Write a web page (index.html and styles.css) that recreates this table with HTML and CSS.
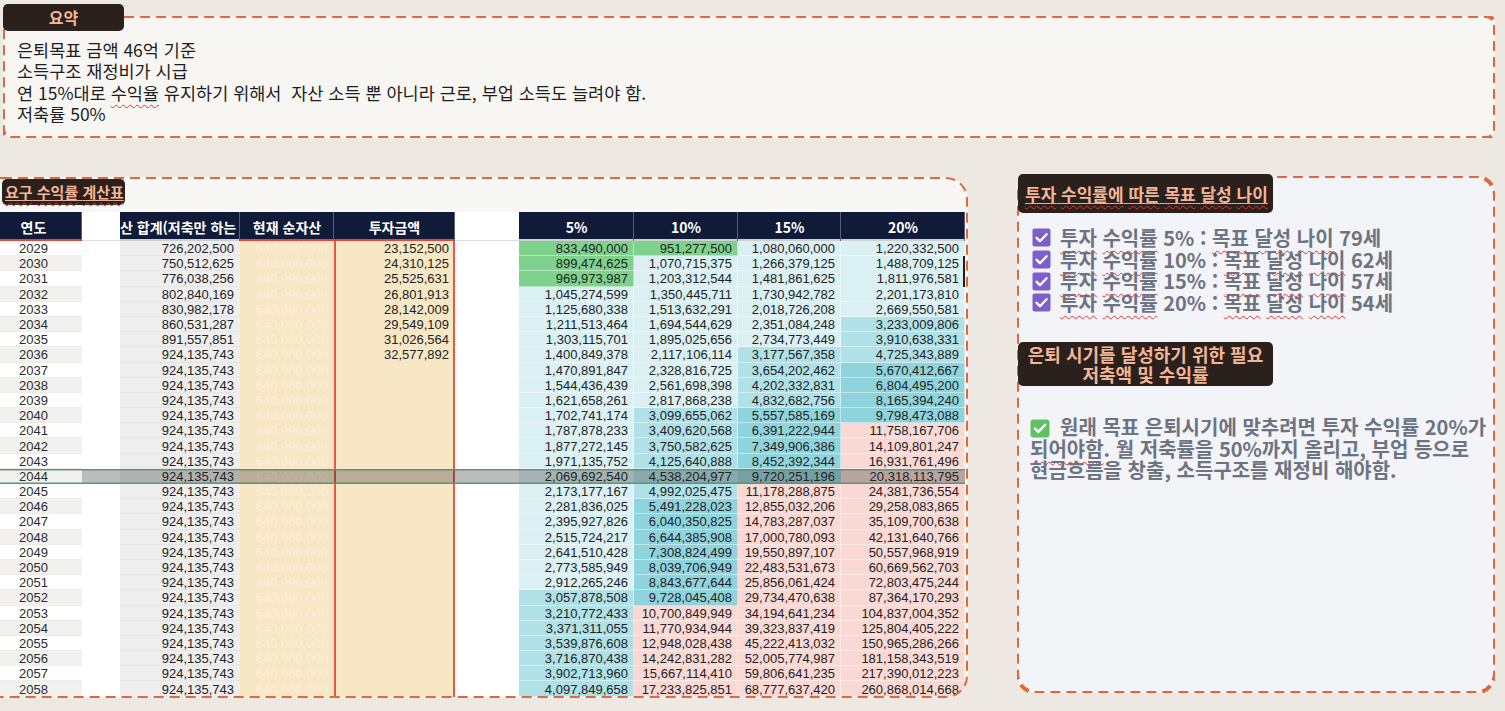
FILE: index.html
```html
<!DOCTYPE html>
<html lang="ko">
<head>
<meta charset="utf-8">
<title>은퇴 계획 요약</title>
<link rel="stylesheet" href="styles.css">
</head>
<body>
<div class="page">
  <section class="summary box">
    <div class="tab tab-summary">요약</div>
    <div class="summary-text">
      <p>은퇴목표 금액 46억 기준</p>
      <p>소득구조 재정비가 시급</p>
      <p>연 15%대로 <span class="sq">수익율</span> 유지하기 위해서&nbsp; 자산 소득 뿐 아니라 근로, 부업 소득도 늘려야 함.</p>
      <p>저축률 50%</p>
    </div>
  </section>

  <div class="main">
    <section class="calc box">
      <div class="tab tab-calc"><span class="ul"><span class="sq">요구</span> <span class="sq">수익률</span> <span class="sq">계산표</span></span></div>
      <table class="grid">
        <colgroup>
          <col class="c-year"><col class="c-gap1"><col class="c-sum"><col class="c-net"><col class="c-inv"><col class="c-gap2"><col class="c-r5"><col class="c-r10"><col class="c-r15"><col class="c-r20">
        </colgroup>
        <thead>
          <tr>
            <th class="red">연도</th><th class="gap"></th><th class="hsum">산 합계(저축만 하는</th><th class="red">현재 순자산</th><th class="red">투자금액</th><th class="gap"></th><th>5%</th><th>10%</th><th>15%</th><th>20%</th>
          </tr>
        </thead>
        <tbody>
          <tr><td class="y">2029</td><td class="gap"></td><td class="tot">726,202,500</td><td class="net">640,000,000</td><td class="inv">23,152,500</td><td class="gap"></td><td class="g">833,490,000</td><td class="g">951,277,500</td><td class="l">1,080,060,000</td><td class="l">1,220,332,500</td></tr>
          <tr class="alt"><td class="y">2030</td><td class="gap"></td><td class="tot">750,512,625</td><td class="net">640,000,000</td><td class="inv">24,310,125</td><td class="gap"></td><td class="g">899,474,625</td><td class="l">1,070,715,375</td><td class="l">1,266,379,125</td><td class="l mark">1,488,709,125</td></tr>
          <tr><td class="y">2031</td><td class="gap"></td><td class="tot">776,038,256</td><td class="net">640,000,000</td><td class="inv">25,525,631</td><td class="gap"></td><td class="g">969,973,987</td><td class="l">1,203,312,544</td><td class="l">1,481,861,625</td><td class="l mark">1,811,976,581</td></tr>
          <tr class="alt"><td class="y">2032</td><td class="gap"></td><td class="tot">802,840,169</td><td class="net">640,000,000</td><td class="inv">26,801,913</td><td class="gap"></td><td class="l">1,045,274,599</td><td class="l">1,350,445,711</td><td class="l">1,730,942,782</td><td class="l">2,201,173,810</td></tr>
          <tr><td class="y">2033</td><td class="gap"></td><td class="tot">830,982,178</td><td class="net">640,000,000</td><td class="inv">28,142,009</td><td class="gap"></td><td class="l">1,125,680,338</td><td class="l">1,513,632,291</td><td class="l">2,018,726,208</td><td class="l">2,669,550,581</td></tr>
          <tr class="alt"><td class="y">2034</td><td class="gap"></td><td class="tot">860,531,287</td><td class="net">640,000,000</td><td class="inv">29,549,109</td><td class="gap"></td><td class="l">1,211,513,464</td><td class="l">1,694,544,629</td><td class="l">2,351,084,248</td><td class="m">3,233,009,806</td></tr>
          <tr><td class="y">2035</td><td class="gap"></td><td class="tot">891,557,851</td><td class="net">640,000,000</td><td class="inv">31,026,564</td><td class="gap"></td><td class="l">1,303,115,701</td><td class="l">1,895,025,656</td><td class="l">2,734,773,449</td><td class="m">3,910,638,331</td></tr>
          <tr class="alt"><td class="y">2036</td><td class="gap"></td><td class="tot">924,135,743</td><td class="net">640,000,000</td><td class="inv">32,577,892</td><td class="gap"></td><td class="l">1,400,849,378</td><td class="l">2,117,106,114</td><td class="m">3,177,567,358</td><td class="m">4,725,343,889</td></tr>
          <tr><td class="y">2037</td><td class="gap"></td><td class="tot">924,135,743</td><td class="net">640,000,000</td><td class="inv"></td><td class="gap"></td><td class="l">1,470,891,847</td><td class="l">2,328,816,725</td><td class="m">3,654,202,462</td><td class="d">5,670,412,667</td></tr>
          <tr class="alt"><td class="y">2038</td><td class="gap"></td><td class="tot">924,135,743</td><td class="net">640,000,000</td><td class="inv"></td><td class="gap"></td><td class="l">1,544,436,439</td><td class="l">2,561,698,398</td><td class="m">4,202,332,831</td><td class="d">6,804,495,200</td></tr>
          <tr><td class="y">2039</td><td class="gap"></td><td class="tot">924,135,743</td><td class="net">640,000,000</td><td class="inv"></td><td class="gap"></td><td class="l">1,621,658,261</td><td class="l">2,817,868,238</td><td class="m">4,832,682,756</td><td class="d">8,165,394,240</td></tr>
          <tr class="alt"><td class="y">2040</td><td class="gap"></td><td class="tot">924,135,743</td><td class="net">640,000,000</td><td class="inv"></td><td class="gap"></td><td class="l">1,702,741,174</td><td class="m">3,099,655,062</td><td class="d">5,557,585,169</td><td class="d">9,798,473,088</td></tr>
          <tr><td class="y">2041</td><td class="gap"></td><td class="tot">924,135,743</td><td class="net">640,000,000</td><td class="inv"></td><td class="gap"></td><td class="l">1,787,878,233</td><td class="m">3,409,620,568</td><td class="d">6,391,222,944</td><td class="p">11,758,167,706</td></tr>
          <tr class="alt"><td class="y">2042</td><td class="gap"></td><td class="tot">924,135,743</td><td class="net">640,000,000</td><td class="inv"></td><td class="gap"></td><td class="l">1,877,272,145</td><td class="m">3,750,582,625</td><td class="d">7,349,906,386</td><td class="p">14,109,801,247</td></tr>
          <tr><td class="y">2043</td><td class="gap"></td><td class="tot">924,135,743</td><td class="net">640,000,000</td><td class="inv"></td><td class="gap"></td><td class="l">1,971,135,752</td><td class="m">4,125,640,888</td><td class="d">8,452,392,344</td><td class="p">16,931,761,496</td></tr>
          <tr class="alt sel"><td class="y">2044</td><td class="gap"></td><td class="tot">924,135,743</td><td class="net">640,000,000</td><td class="inv"></td><td class="gap"></td><td class="l">2,069,692,540</td><td class="m">4,538,204,977</td><td class="d">9,720,251,196</td><td class="p">20,318,113,795</td></tr>
          <tr><td class="y">2045</td><td class="gap"></td><td class="tot">924,135,743</td><td class="net">640,000,000</td><td class="inv"></td><td class="gap"></td><td class="l">2,173,177,167</td><td class="m">4,992,025,475</td><td class="p">11,178,288,875</td><td class="p">24,381,736,554</td></tr>
          <tr class="alt"><td class="y">2046</td><td class="gap"></td><td class="tot">924,135,743</td><td class="net">640,000,000</td><td class="inv"></td><td class="gap"></td><td class="l">2,281,836,025</td><td class="d">5,491,228,023</td><td class="p">12,855,032,206</td><td class="p">29,258,083,865</td></tr>
          <tr><td class="y">2047</td><td class="gap"></td><td class="tot">924,135,743</td><td class="net">640,000,000</td><td class="inv"></td><td class="gap"></td><td class="l">2,395,927,826</td><td class="d">6,040,350,825</td><td class="p">14,783,287,037</td><td class="p">35,109,700,638</td></tr>
          <tr class="alt"><td class="y">2048</td><td class="gap"></td><td class="tot">924,135,743</td><td class="net">640,000,000</td><td class="inv"></td><td class="gap"></td><td class="l">2,515,724,217</td><td class="d">6,644,385,908</td><td class="p">17,000,780,093</td><td class="p">42,131,640,766</td></tr>
          <tr><td class="y">2049</td><td class="gap"></td><td class="tot">924,135,743</td><td class="net">640,000,000</td><td class="inv"></td><td class="gap"></td><td class="l">2,641,510,428</td><td class="d">7,308,824,499</td><td class="p">19,550,897,107</td><td class="p">50,557,968,919</td></tr>
          <tr class="alt"><td class="y">2050</td><td class="gap"></td><td class="tot">924,135,743</td><td class="net">640,000,000</td><td class="inv"></td><td class="gap"></td><td class="l">2,773,585,949</td><td class="d">8,039,706,949</td><td class="p">22,483,531,673</td><td class="p">60,669,562,703</td></tr>
          <tr><td class="y">2051</td><td class="gap"></td><td class="tot">924,135,743</td><td class="net">640,000,000</td><td class="inv"></td><td class="gap"></td><td class="l">2,912,265,246</td><td class="d">8,843,677,644</td><td class="p">25,856,061,424</td><td class="p">72,803,475,244</td></tr>
          <tr class="alt"><td class="y">2052</td><td class="gap"></td><td class="tot">924,135,743</td><td class="net">640,000,000</td><td class="inv"></td><td class="gap"></td><td class="m">3,057,878,508</td><td class="d">9,728,045,408</td><td class="p">29,734,470,638</td><td class="p">87,364,170,293</td></tr>
          <tr><td class="y">2053</td><td class="gap"></td><td class="tot">924,135,743</td><td class="net">640,000,000</td><td class="inv"></td><td class="gap"></td><td class="m">3,210,772,433</td><td class="p">10,700,849,949</td><td class="p">34,194,641,234</td><td class="p">104,837,004,352</td></tr>
          <tr class="alt"><td class="y">2054</td><td class="gap"></td><td class="tot">924,135,743</td><td class="net">640,000,000</td><td class="inv"></td><td class="gap"></td><td class="m">3,371,311,055</td><td class="p">11,770,934,944</td><td class="p">39,323,837,419</td><td class="p">125,804,405,222</td></tr>
          <tr><td class="y">2055</td><td class="gap"></td><td class="tot">924,135,743</td><td class="net">640,000,000</td><td class="inv"></td><td class="gap"></td><td class="m">3,539,876,608</td><td class="p">12,948,028,438</td><td class="p">45,222,413,032</td><td class="p">150,965,286,266</td></tr>
          <tr class="alt"><td class="y">2056</td><td class="gap"></td><td class="tot">924,135,743</td><td class="net">640,000,000</td><td class="inv"></td><td class="gap"></td><td class="m">3,716,870,438</td><td class="p">14,242,831,282</td><td class="p">52,005,774,987</td><td class="p">181,158,343,519</td></tr>
          <tr><td class="y">2057</td><td class="gap"></td><td class="tot">924,135,743</td><td class="net">640,000,000</td><td class="inv"></td><td class="gap"></td><td class="m">3,902,713,960</td><td class="p">15,667,114,410</td><td class="p">59,806,641,235</td><td class="p">217,390,012,223</td></tr>
          <tr class="alt"><td class="y">2058</td><td class="gap"></td><td class="tot">924,135,743</td><td class="net">640,000,000</td><td class="inv"></td><td class="gap"></td><td class="m">4,097,849,658</td><td class="p">17,233,825,851</td><td class="p">68,777,637,420</td><td class="p">260,868,014,668</td></tr>
        </tbody>
      </table>
    </section>

    <aside class="side box">
      <div class="tab tab-age"><span class="ul"><span class="sq">투자</span> <span class="sq">수익률에</span> <span class="sq">따른</span> <span class="sq">목표</span> <span class="sq">달성</span> <span class="sq">나이</span></span></div>
      <ul class="checks">
        <li><svg class="cb" viewBox="0 0 19 19" width="19" height="19"><rect x="0.5" y="0.5" width="18" height="18" rx="2" fill="#7d5fcb"/><path d="M4.6 9.8l3.4 3.4 6.6-7" fill="none" stroke="#fff" stroke-width="2.4" stroke-linecap="round" stroke-linejoin="round"/></svg><span><span class="sq">투자</span> <span class="sq">수익률</span> 5% : <span class="sq">목표</span> <span class="sq">달성</span> <span class="sq">나이</span> 79세</span></li>
        <li><svg class="cb" viewBox="0 0 19 19" width="19" height="19"><rect x="0.5" y="0.5" width="18" height="18" rx="2" fill="#7d5fcb"/><path d="M4.6 9.8l3.4 3.4 6.6-7" fill="none" stroke="#fff" stroke-width="2.4" stroke-linecap="round" stroke-linejoin="round"/></svg><span><span class="sq">투자</span> <span class="sq">수익률</span> 10% : <span class="sq">목표</span> <span class="sq">달성</span> <span class="sq">나이</span> 62세</span></li>
        <li><svg class="cb" viewBox="0 0 19 19" width="19" height="19"><rect x="0.5" y="0.5" width="18" height="18" rx="2" fill="#7d5fcb"/><path d="M4.6 9.8l3.4 3.4 6.6-7" fill="none" stroke="#fff" stroke-width="2.4" stroke-linecap="round" stroke-linejoin="round"/></svg><span><span class="sq">투자</span> <span class="sq">수익률</span> 15% : <span class="sq">목표</span> <span class="sq">달성</span> <span class="sq">나이</span> 57세</span></li>
        <li><svg class="cb" viewBox="0 0 19 19" width="19" height="19"><rect x="0.5" y="0.5" width="18" height="18" rx="2" fill="#7d5fcb"/><path d="M4.6 9.8l3.4 3.4 6.6-7" fill="none" stroke="#fff" stroke-width="2.4" stroke-linecap="round" stroke-linejoin="round"/></svg><span><span class="sq">투자</span> <span class="sq">수익률</span> 20% : <span class="sq">목표</span> <span class="sq">달성</span> <span class="sq">나이</span> 54세</span></li>
      </ul>
      <div class="tab tab-need">은퇴 시기를 달성하기 위한 필요<br>저축액 및 수익률</div>
      <p class="advice"><svg class="ok" viewBox="0 0 20 19" width="20" height="19"><rect x="0.5" y="0.5" width="19" height="18" rx="3" fill="#5fc163"/><path d="M5 9.6l3.3 3.3 6.8-7" fill="none" stroke="#fff" stroke-width="2.6" stroke-linecap="round" stroke-linejoin="round"/></svg>원래 목표 은퇴시기에 맞추려면 투자 수익률 20%가<br><span class="sq">되어야함</span>. 월 저축률을 50%까지 올리고, 부업 등으로<br>현금흐름을 창출, 소득구조를 재정비 해야함.</p>
    </aside>
  </div>
</div>
</body>
</html>
```

FILE: styles.css
```css
* { box-sizing: border-box; }
html, body { margin: 0; padding: 0; }
body {
  width: 1505px;
  height: 711px;
  overflow: hidden;
  background: #eee8e2;
  font-family: "Noto Sans CJK KR", "Noto Sans", sans-serif;
  color: #1e1e1e;
}
.page { padding-top: 16px; }

/* dashed frames */
.box { position: relative; display: flow-root; }
.box::after {
  content: "";
  position: absolute;
  top: 0; right: 0; bottom: 0; left: 0;
  pointer-events: none;
  z-index: 1;
  background-repeat: no-repeat;
}

.tab {
  position: relative;
  z-index: 2;
  background: #2a201c;
  color: #f3b697;
  font-weight: 700;
  border-radius: 5px;
}
.ul { text-decoration: underline; text-decoration-color: #e9ad8f; text-underline-offset: 2px; }
.sq {
  text-decoration: underline wavy #e33232;
  text-decoration-thickness: 1px;
  text-underline-offset: 4px;
}

/* summary */
.summary {
  margin-left: 3px;
  width: 1492px;
  height: 122px;
  background: #f8f6f3;
  border-radius: 9px;
  padding-left: 14px;
}
.summary::after {
  background-image: url("data:image/svg+xml,%3Csvg xmlns='http://www.w3.org/2000/svg' width='100%25' height='100%25'%3E%3Crect x='0' y='0' width='100%25' height='100%25' rx='9' fill='none' stroke='%23dd6a3e' stroke-width='4' stroke-dasharray='10 6'/%3E%3C/svg%3E");
}
.tab-summary {
  width: 121px;
  height: 27px;
  margin: -12px 0 0 -14px;
  font-size: 16px;
  line-height: 27px;
  text-align: center;
}
.summary-text {
  margin-top: 8px;
  font-size: 17.5px;
  line-height: 21.3px;
}
.summary-text p { margin: 0; white-space: nowrap; }

/* main row */
.main {
  display: flex;
  align-items: flex-start;
  margin-top: 39px;
}

.calc {
  width: 968px;
  height: 521px;
  background: #f8f7f5;
  border-radius: 0 22px 22px 0;
  overflow: hidden;
}
.calc::after {
  left: -20px;
  background-image: url("data:image/svg+xml,%3Csvg xmlns='http://www.w3.org/2000/svg' width='100%25' height='100%25'%3E%3Crect x='0' y='0' width='100%25' height='100%25' rx='22' fill='none' stroke='%23dd6a3e' stroke-width='4' stroke-dasharray='10 6'/%3E%3C/svg%3E");
}
.tab-calc {
  width: 123px;
  height: 26px;
  margin: 2px 0 0 2px;
  padding-left: 3px;
  font-size: 15px;
  line-height: 26px;
  white-space: nowrap;
}

/* table */
.grid {
  border-collapse: collapse;
  table-layout: fixed;
  width: 980px;
  margin: 7px 0 0 -15px;
  font-family: "Liberation Sans", Arial, sans-serif;
  font-size: 13px;
  color: #222;
}
.c-year { width: 97px; }
.c-gap1 { width: 38px; }
.c-sum { width: 120px; }
.c-net { width: 94px; }
.c-inv { width: 121px; }
.c-gap2 { width: 64px; }
.c-r5 { width: 115px; }
.c-r10 { width: 104px; }
.c-r15 { width: 103px; }
.c-r20 { width: 124px; }

.grid th {
  height: 29px;
  padding: 0;
  background: #0f1b39;
  color: #fff;
  font-family: "Noto Sans CJK KR", sans-serif;
  font-weight: 700;
  font-size: 14px;
  text-align: center;
  white-space: nowrap;
  overflow: hidden;
  box-shadow: inset -1px 0 #56607a, inset 0 -2px #cfcfcf;
}
.grid th.red { box-shadow: inset -1px 0 #56607a, inset 0 -2px #e2493d; }
.grid th.gap { background: #fff; box-shadow: inset 0 -1px #dddddd; }
.grid th.hsum { text-align: right; padding-right: 4px; }

.grid td {
  height: 15.2px;
  padding: 0 6px 0 0;
  line-height: 15px;
  text-align: right;
  white-space: nowrap;
  overflow: hidden;
  box-shadow: inset 0 -1px rgba(255, 255, 255, 0.45), inset -1px 0 rgba(255, 255, 255, 0.45);
}
.grid td.y {
  text-align: center;
  padding: 0;
  background: #fff;
  color: #2b2b2b;
  box-shadow: inset 0 -1px #efece8;
}
.grid tr.alt td.y { background: #f3f1ee; }
.grid td.gap { background: #fff; box-shadow: none; }
.grid td.tot { background: #eeeeee; box-shadow: inset 0 -1px #e6e6e6; }
.grid td.net { background: #f8e7c5; color: #fcefd9; box-shadow: none; }
.grid td.inv { background: #f8e7c5; box-shadow: inset 2px 0 #ef5546, inset -2px 0 #ef5546; }
.grid td.g { background: #7ed28d; }
.grid td.l { background: #daf0f3; }
.grid td.m { background: #afe1e7; }
.grid td.d { background: #8fd4dc; }
.grid td.p { background: #fad9d5; }
.grid td.mark { box-shadow: inset -2px 0 #1f1f1f; }

.grid tr.sel td {
  background-image: linear-gradient(rgba(70, 70, 70, 0.36), rgba(70, 70, 70, 0.36));
  box-shadow: inset 0 1.5px #5f9479, inset 0 -1.5px #5f9479;
}
.grid tr.sel td.net { color: #c2b69f; }
.grid tr.sel td.inv {
  box-shadow: inset 0 1.5px #5f9479, inset 0 -1.5px #5f9479, inset 2px 0 #a4463c, inset -2px 0 #a4463c;
}

/* side panel */
.side {
  margin: -1px 0 0 49px;
  width: 478px;
  height: 517px;
  background: #f2f4f8;
  border-radius: 20px;
  padding-left: 2px;
}
.side::after {
  background-image: url("data:image/svg+xml,%3Csvg xmlns='http://www.w3.org/2000/svg' width='100%25' height='100%25'%3E%3Crect x='0' y='0' width='100%25' height='100%25' rx='20' fill='none' stroke='%23dd6a3e' stroke-width='4' stroke-dasharray='10 6'/%3E%3C/svg%3E");
}
.tab-age {
  width: 255px;
  height: 39px;
  margin: -2px 0 0 -1px;
  padding-left: 7px;
  font-size: 17px;
  line-height: 39px;
  white-space: nowrap;
}
.checks {
  list-style: none;
  margin: 14px 0 0;
  padding: 0 0 0 13px;
  color: #6e7381;
  font-weight: 700;
  font-size: 20px;
  line-height: 21.7px;
}
.checks li {
  display: flex;
  align-items: center;
  gap: 9px;
  white-space: nowrap;
}
.cb { flex: none; }
.tab-need {
  width: 255px;
  height: 44px;
  margin: 28px 0 0 -1px;
  padding-top: 2px;
  font-size: 18px;
  line-height: 20px;
  text-align: center;
  white-space: nowrap;
}
.advice {
  margin: 30px 0 0;
  padding-left: 11px;
  color: #6e7381;
  font-weight: 700;
  font-size: 20px;
  line-height: 21.5px;
  white-space: nowrap;
}
.ok {
  vertical-align: -3px;
  margin-right: 10px;
}
```
